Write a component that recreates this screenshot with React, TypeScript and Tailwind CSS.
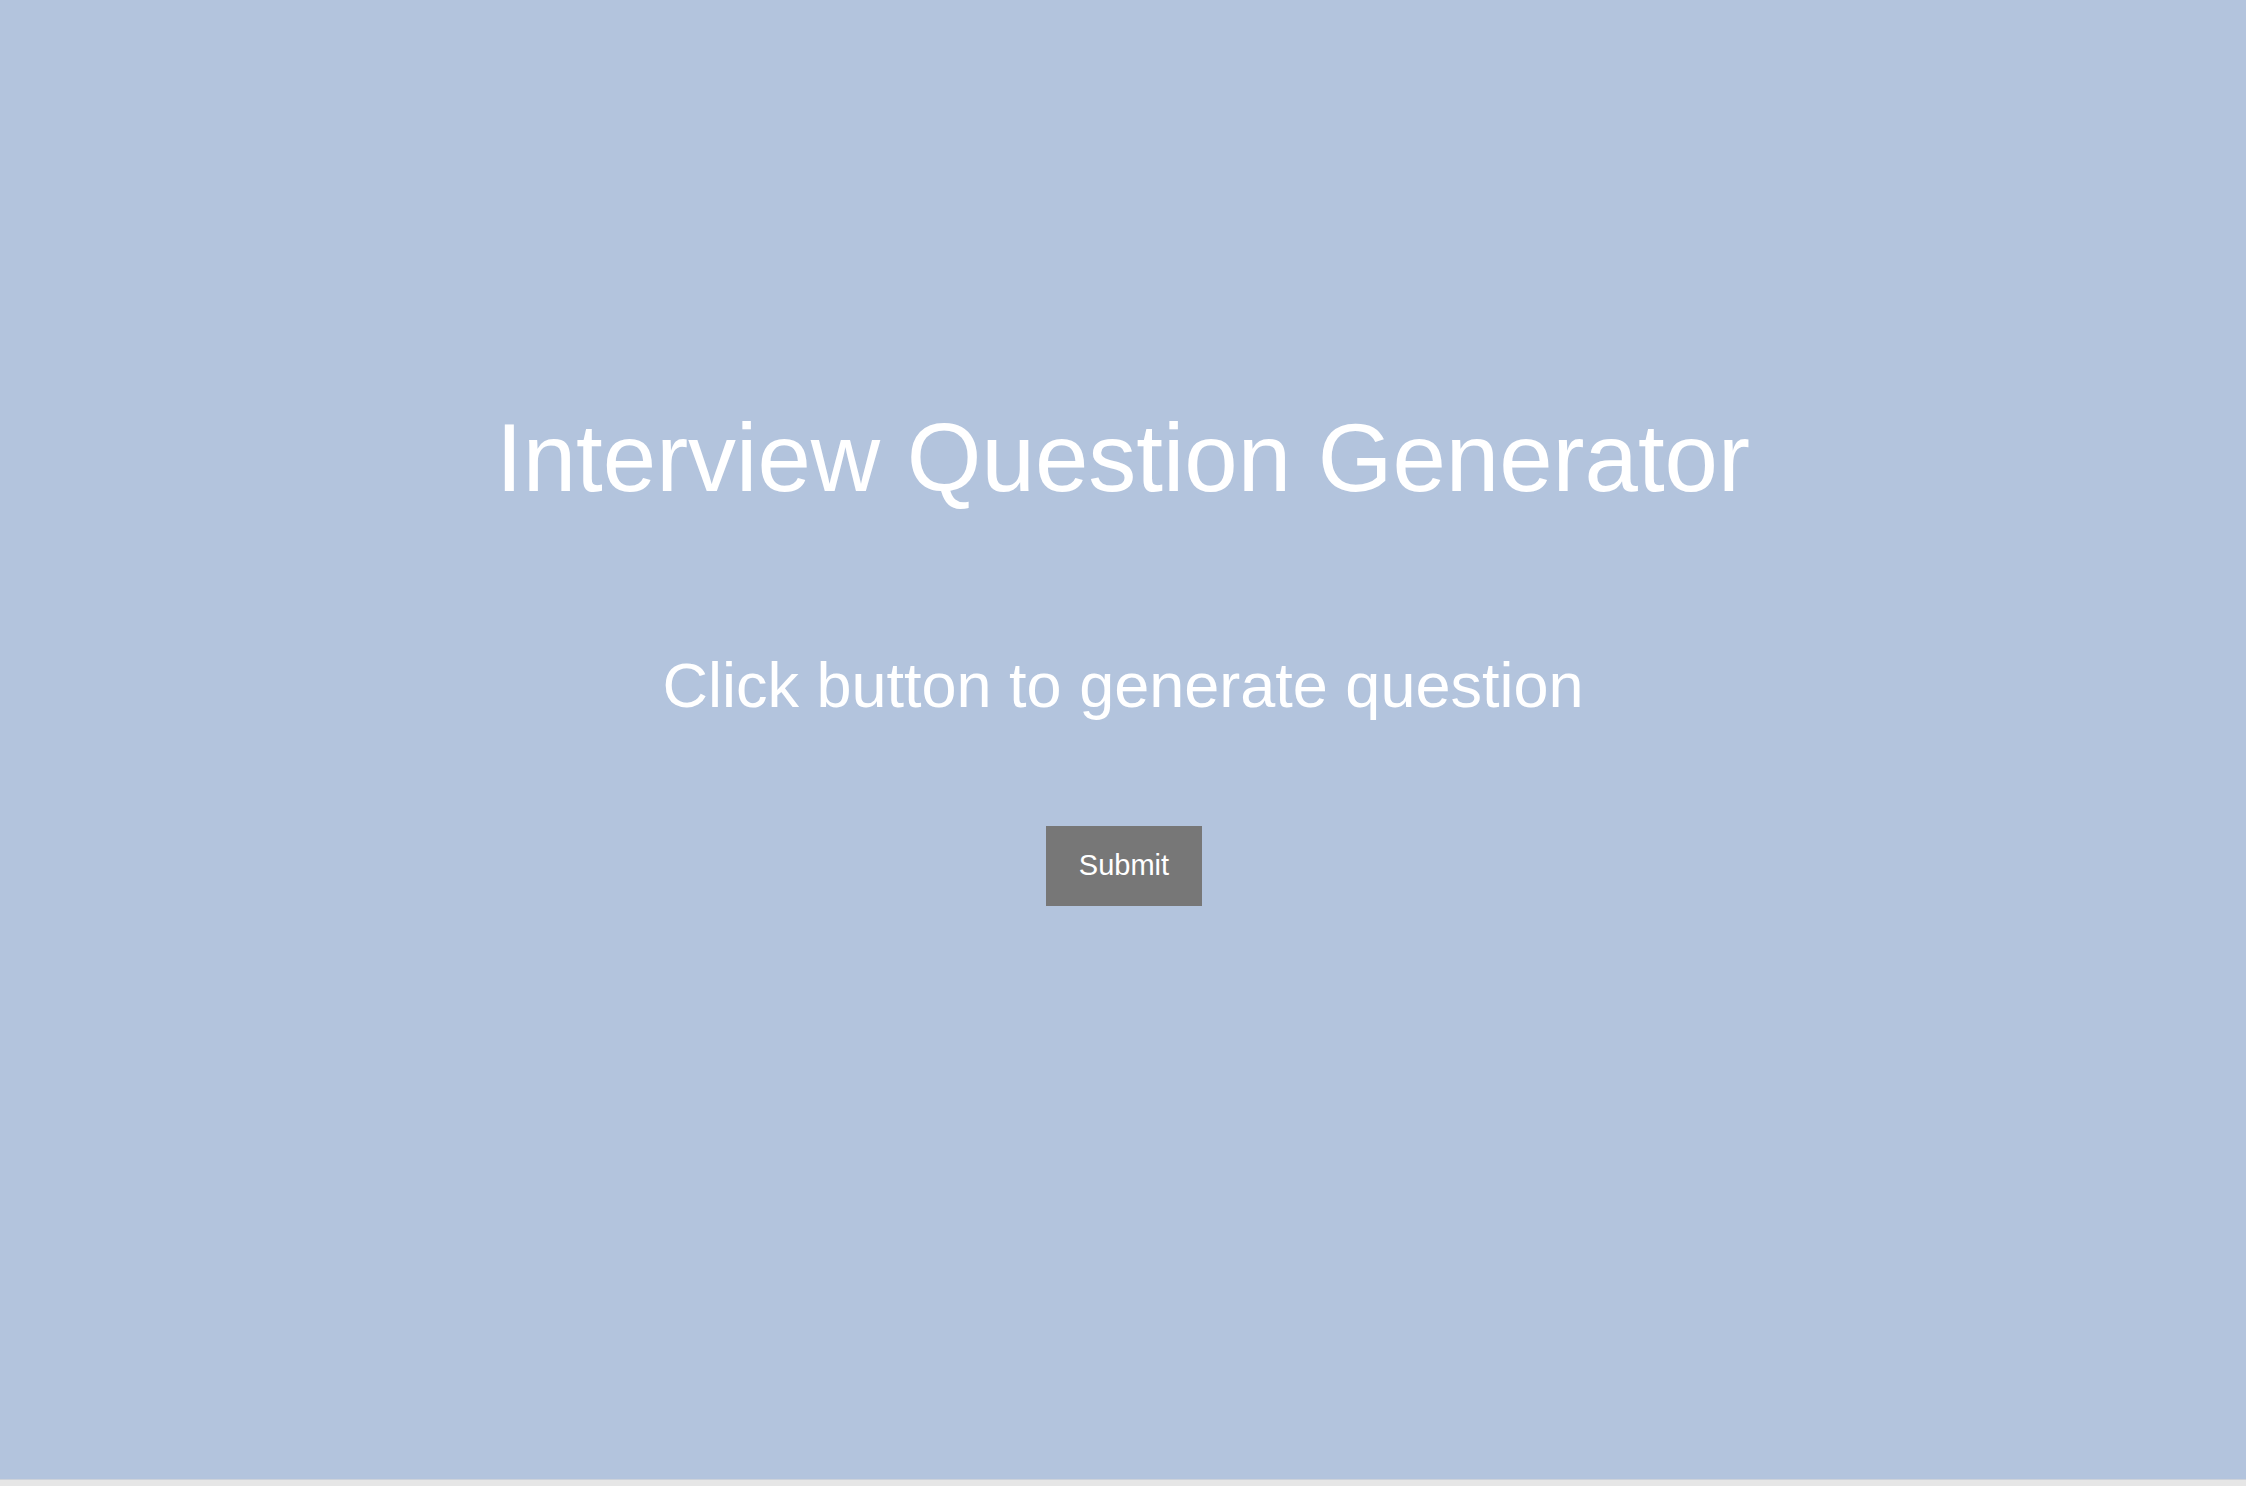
export default function App() {
  const handleSubmit = () => {
  };

  return (
    <div className="min-h-[1486px] bg-[#e6e6e6] font-['Liberation_Sans',Arial,sans-serif]">
      <div className="h-[1480px] bg-[#b3c4dd] border-b border-[#cdd2da] flex flex-col items-center text-white">
        <h1 className="mt-[403px] text-[96px] leading-[110px] font-normal">
          Interview Question Generator
        </h1>
        <p className="mt-[136px] text-[63px] leading-[72px]">
          Click button to generate question
        </p>
        <button
          onClick={handleSubmit}
          className="mt-[105px] ml-[2px] w-[156px] h-[80px] bg-[#777777] text-[29px] text-white flex items-center justify-center"
        >
          Submit
        </button>
      </div>
    </div>
  );
}
